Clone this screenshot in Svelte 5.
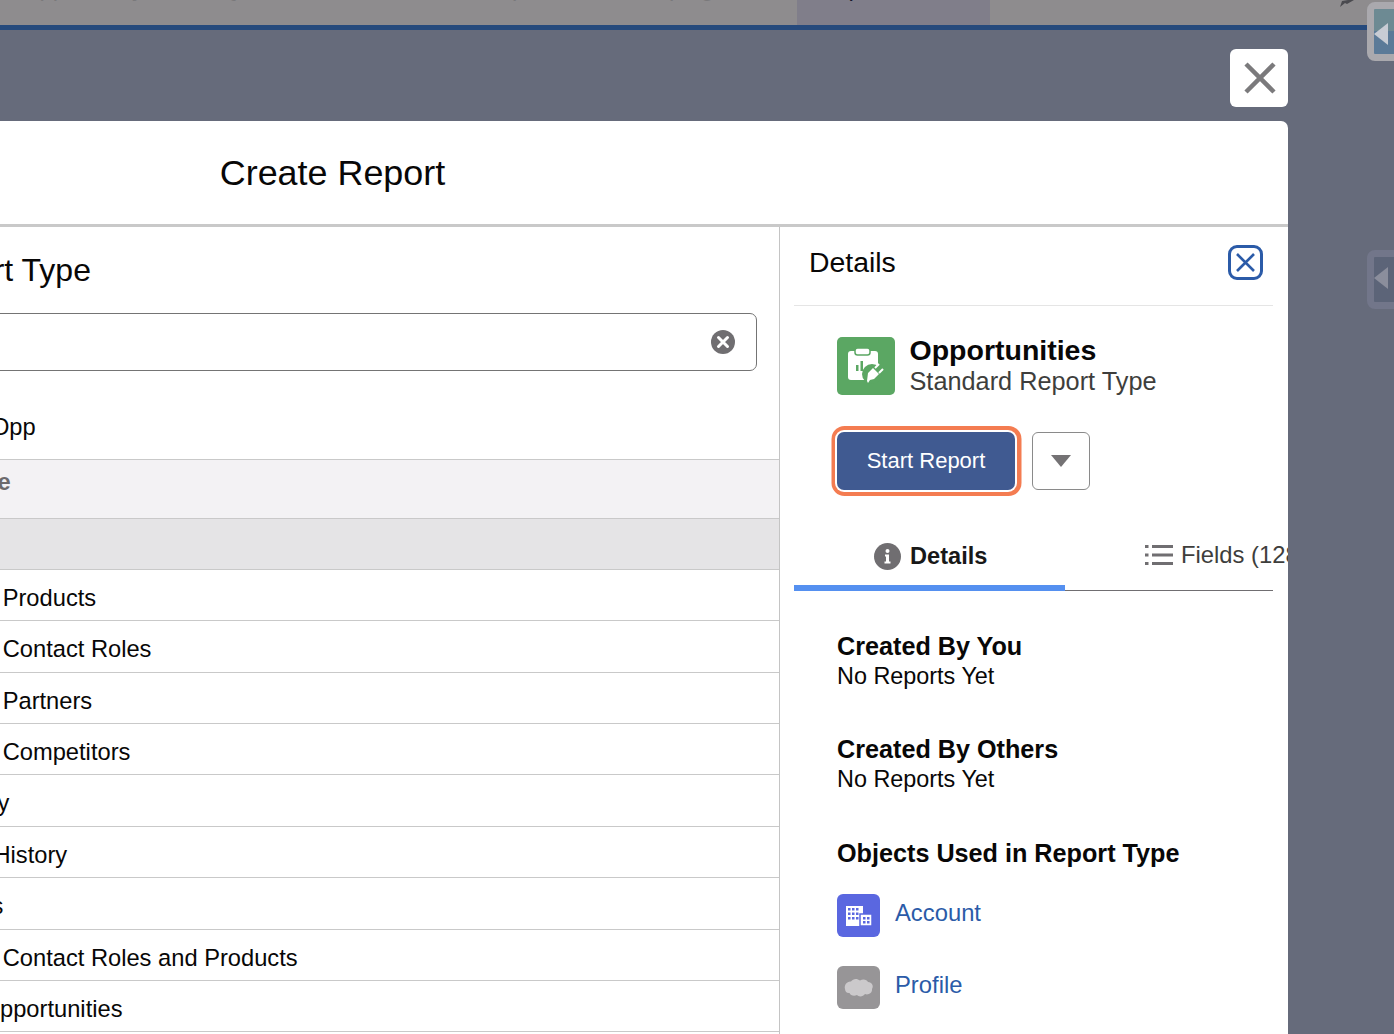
<script>
  const navTabs = [
    { label: 'Opportunity', active: false },
    { label: 'Quotes', active: false },
    { label: 'Leads Pipeline', active: false },
    { label: 'Campaigns', active: false },
    { label: 'Reports', active: true },
    { label: 'Chatter', active: false }
  ];
  const rows = [
    { text: 'Customer Report Opp', kind: 'first', inset: 428 },
    { text: 'Standard Report Type', kind: 'section', inset: 389 },
    { text: 'Opportunities', kind: 'selected', inset: 430.5 },
    { text: 'Opportunities with Products', kind: 'plain', inset: 430.5 },
    { text: 'Opportunities with Contact Roles', kind: 'plain', inset: 430.5 },
    { text: 'Opportunities with Partners', kind: 'plain', inset: 430.5 },
    { text: 'Opportunities with Competitors', kind: 'plain', inset: 430.5 },
    { text: 'Opportunity History', kind: 'plain', inset: 430.5 },
    { text: 'Opportunity Field History', kind: 'plain', inset: 430.5 },
    { text: 'Opportunity Trends', kind: 'plain', inset: 426 },
    { text: 'Opportunities with Contact Roles and Products', kind: 'plain', inset: 430.5 },
    { text: 'Campaigns with Opportunities', kind: 'plain', inset: 430.5 }
  ];
</script>

<div class="page">
  <header class="topbar">
    {#each navTabs as tab}
      <div class="navtab" class:active={tab.active}><span>{tab.label}</span></div>
    {/each}
    <svg class="pencil" width="18" height="8" viewBox="0 0 18 8"><path d="M1 7 L3 1 L9 0 L15 0 L8 4 L6 3 Z" fill="#4a4a4f"/></svg>
  </header>
  <div class="rule"></div>

  <div class="backdrop">
    <button class="close" aria-label="Close">
      <svg width="32" height="32" viewBox="0 0 32 32"><path d="M2 2 L30 30 M30 2 L2 30" stroke="#7b7a7c" stroke-width="4.5"/></svg>
    </button>

    <section class="modal">
      <h1 class="title">Create Report</h1>
      <div class="body">
        <div class="chooser">
          <h2 class="heading">Choose Report Type</h2>
          <div class="search">
            <svg width="24" height="24" viewBox="0 0 24 24"><circle cx="12" cy="12" r="12" fill="#706e71"/><path d="M7.5 7.5 L16.500 16.500 M16.500 7.500 L7.500 16.500" stroke="#fff" stroke-width="3" stroke-linecap="round"/></svg>
          </div>
          <ul class="list">
            {#each rows as row}
              <li class={row.kind} style:padding-left="{row.inset}px">{row.text}</li>
            {/each}
          </ul>
        </div>

        <aside class="details">
          <div class="details-head">
            <span>Details</span>
            <button class="xbox" aria-label="Close details">
              <svg width="21" height="21" viewBox="0 0 21 21"><path d="M2 2 L19 19 M19 2 L2 19" stroke="#2b5ba8" stroke-width="2.600"/></svg>
            </button>
          </div>

          <div class="summary">
            <svg class="tile" width="58" height="58" viewBox="0 0 58 58">
              <rect width="58" height="58" rx="5" fill="#5ba763"/>
              <rect x="11" y="14" width="30" height="29" rx="3" fill="#fff"/>
              <rect x="18" y="11" width="15" height="7" rx="2.500" fill="#fff" stroke="#5ba763" stroke-width="1.500"/>
              <rect x="19" y="28" width="2.500" height="6" fill="#5ba763"/>
              <rect x="23.500" y="24" width="2.500" height="10" fill="#5ba763"/>
              <circle cx="35" cy="37" r="10" fill="#5ba763"/>
              <path d="M30 44 L31 36 L36 31 L42 37 L37 42 L33 43 L31 46 Z" fill="#fff"/>
              <path d="M38 31 L42 27 M42 36 L46 32" stroke="#fff" stroke-width="2"/>
            </svg>
            <div class="summary-text">
              <strong>Opportunities</strong>
              <span>Standard Report Type</span>
            </div>
          </div>

          <div class="actions">
            <button class="start">Start Report</button>
            <button class="more" aria-label="More actions">
              <svg width="20" height="12" viewBox="0 0 20 12"><path d="M0 0 H20 L10 12 Z" fill="#747274"/></svg>
            </button>
          </div>

          <div class="tabs">
            <div class="tab current">
              <svg width="27" height="27" viewBox="0 0 27 27"><circle cx="13.500" cy="13.500" r="13.500" fill="#706e71"/><path d="M11 11.500 H15 V18.500 H16.500 V20.500 H10.500 V18.500 H12 V13.500 H11 Z" fill="#fff"/><circle cx="13.500" cy="8" r="2" fill="#fff"/></svg>
              <b>Details</b>
            </div>
            <div class="tab other">
              <svg width="28" height="22" viewBox="0 0 28 22"><g fill="#706e71"><rect x="0" y="1" width="3.500" height="3"/><rect x="0" y="9.500" width="3.500" height="3"/><rect x="0" y="18" width="3.500" height="3"/><rect x="7" y="1" width="21" height="3"/><rect x="7" y="9.500" width="21" height="3"/><rect x="7" y="18" width="21" height="3"/></g></svg>
              <span>Fields (128)</span>
            </div>
          </div>

          <div class="block one">
            <h3>Created By You</h3>
            <p>No Reports Yet</p>
          </div>
          <div class="block two">
            <h3>Created By Others</h3>
            <p>No Reports Yet</p>
          </div>
          <div class="block three">
            <h3>Objects Used in Report Type</h3>
          </div>

          <div class="object">
            <svg width="43" height="43" viewBox="0 0 43 43">
              <rect width="43" height="43" rx="6" fill="#5a67e0"/>
              <rect x="9" y="12" width="17" height="20" fill="#fff"/>
              <rect x="23" y="20" width="12" height="12" fill="#fff" stroke="#5a67e0" stroke-width="1.500"/>
              <g fill="#5a67e0">
                <rect x="11" y="14" width="2.500" height="2.500"/><rect x="15" y="14" width="2.500" height="2.500"/><rect x="19" y="14" width="2.500" height="2.500"/>
                <rect x="11" y="18.500" width="2.500" height="2.500"/><rect x="15" y="18.500" width="2.500" height="2.500"/><rect x="19" y="18.500" width="2.500" height="2.500"/>
                <rect x="11" y="23" width="2.500" height="2.500"/><rect x="15" y="23" width="2.500" height="2.500"/><rect x="19" y="23" width="2.500" height="2.500"/>
                <rect x="26" y="23" width="2.500" height="2.500"/><rect x="30" y="23" width="2.500" height="2.500"/>
                <rect x="26" y="27" width="2.500" height="2.500"/><rect x="30" y="27" width="2.500" height="2.500"/>
              </g>
            </svg>
            <a href="#account">Account</a>
          </div>
          <div class="object last">
            <svg width="43" height="43" viewBox="0 0 43 43">
              <rect width="43" height="43" rx="6" fill="#979597"/>
              <path d="M8 23 C7 19 10 15 14 15.500 C16 12.500 20 12 23 14.500 C26 12.500 30 13.500 31 16 C35 16 37 20 35 23 C35.500 27 31 29.500 28 28 C26 31 21.500 31 20 29 C17 30.500 13.500 29.500 12.500 27 C10 27.500 8 25.500 8 23 Z" fill="#cbc9cb"/>
            </svg>
            <a href="#profile">Profile</a>
          </div>
        </aside>
      </div>
    </section>

    <div class="handle upper"><i></i></div>
    <div class="handle lower"><i></i></div>
  </div>
</div>

<style>
  :global(body) { margin: 0; }
  * { box-sizing: border-box; }

  .page {
    position: relative;
    width: 1394px;
    height: 1034px;
    overflow: hidden;
    display: flex;
    flex-direction: column;
    font-family: "Liberation Sans", Arial, sans-serif;
    color: #080707;
  }

  .topbar {
    height: 25px;
    flex: none;
    display: flex;
    background: #8e8c8e;
    overflow: hidden;
    position: relative;
  }
  .navtab {
    width: 199.250px;
    flex: none;
    padding-left: 21px;
    font-size: 23.800px;
    line-height: 28px;
    color: #7a797b;
  }
  .navtab span { display: block; margin-top: -26px; white-space: nowrap; }
  .navtab.active { width: 193px; background: #807e8a; color: #17172b; }
  .pencil { position: absolute; left: 1339px; top: 0; }

  .rule { height: 5px; flex: none; background: #264a7c; }

  .backdrop {
    flex: 1;
    min-height: 0;
    background: #666b7b;
    display: flex;
    flex-direction: column;
    align-items: flex-end;
    padding: 19px 106px 0 0;
  }

  .close {
    width: 58px;
    height: 58px;
    flex: none;
    margin-bottom: 14px;
    padding: 0 0 0 1px;
    border: 0;
    border-radius: 6px;
    background: #fff;
    display: flex;
    align-items: center;
    justify-content: center;
  }

  .modal {
    width: 1912px;
    flex: 1;
    min-height: 0;
    background: #fff;
    border-radius: 7px 7px 0 0;
    overflow: hidden;
    display: flex;
    flex-direction: column;
  }
  .title {
    height: 106px;
    flex: none;
    margin: 0;
    padding-left: 1px;
    border-bottom: 3px solid #c9c9c9;
    font-size: 35.900px;
    font-weight: 400;
    line-height: 105px;
    text-align: center;
  }

  .body { flex: 1; min-height: 0; display: flex; }

  .chooser {
    width: 1404px;
    flex: none;
    border-right: 1px solid #c4c4c4;
  }
  .heading {
    margin: 0;
    height: 86px;
    padding: 23px 0 0 422px;
    font-size: 32px;
    font-weight: 400;
    line-height: 40px;
    white-space: nowrap;
  }
  .search {
    margin-left: 430px;
    width: 951px;
    height: 58px;
    border: 1px solid #747474;
    border-radius: 7px;
    display: flex;
    align-items: center;
    justify-content: flex-end;
    padding-right: 21px;
  }

  .list { list-style: none; margin: 38px 0 0; padding: 0; }
  .list li {
    height: 51.400px;
    border-bottom: 1px solid #c9c9c9;
    font-size: 23.700px;
    line-height: 56px;
    white-space: nowrap;
  }
  .list li.first { line-height: 37px; }
  .list li.section {
    height: 59px;
    background: #f3f2f4;
    color: #6c6a6c;
    font-weight: 700;
    line-height: 45px;
  }
  .list li.selected { height: 50.400px; background: #e5e4e6; }

  .details {
    width: 508px;
    flex: none;
    padding: 0 15px 0 14px;
    overflow: hidden;
  }
  .details-head {
    height: 79px;
    border-bottom: 1px solid #e5e5e5;
    padding: 0 10px 7px 15px;
    display: flex;
    align-items: center;
    justify-content: space-between;
    font-size: 28.400px;
  }
  .xbox {
    width: 35px;
    height: 35px;
    padding: 0;
    background: #fff;
    border: 3px solid #2b5ba8;
    border-radius: 9px;
    display: flex;
    align-items: center;
    justify-content: center;
  }

  .summary {
    display: flex;
    gap: 14.500px;
    padding: 31px 0 0 43px;
  }
  .tile { flex: none; }
  .summary-text { display: flex; flex-direction: column; margin-top: -3px; }
  .summary-text strong { font-size: 28.500px; line-height: 32px; }
  .summary-text span { font-size: 25.300px; line-height: 30px; color: #3e3e3c; }

  .actions {
    display: flex;
    gap: 17px;
    padding: 36px 0 0 43px;
  }
  .start {
    width: 178px;
    height: 58px;
    padding: 0;
    border: 0;
    border-radius: 7px;
    background: #405a91;
    color: #fff;
    font: 400 22px "Liberation Sans", Arial, sans-serif;
    box-shadow: 0 0 0 2px #fff, 0.500px 0 0 6px #f47c51;
  }
  .more {
    width: 58px;
    height: 58px;
    padding: 0;
    background: #fff;
    border: 1px solid #8a8a8a;
    border-radius: 6px;
    display: flex;
    align-items: center;
    justify-content: center;
  }

  .tabs {
    display: flex;
    margin-top: 32px;
    height: 69px;
    position: relative;
    border-bottom: 1.500px solid #706e71;
    margin-bottom: 0;
  }
  .tab { display: flex; align-items: center; height: 66px; white-space: nowrap; font-size: 23.800px; flex: none; }
  .tab.current {
    width: 271px;
    height: 69px;
    padding: 5px 0 0 80px;
    gap: 9px;
    border-bottom: 6px solid #5590f0;
    margin-bottom: -1.500px;
    color: #181818;
  }
  .tab b { font-size: 23.600px; }
  .tab.other { padding-left: 80px; gap: 8px; color: #3e3e3c; }

  .block h3 { margin: 0; font-size: 25.200px; line-height: 30px; font-weight: 700; }
  .block p { margin: 0; font-size: 23.400px; line-height: 30px; }
  .block { padding-left: 43px; }
  .block.one { padding-top: 40px; }
  .block.two { padding-top: 43px; }
  .block.three { padding-top: 44px; }

  .object {
    display: flex;
    align-items: center;
    gap: 15px;
    padding: 26px 0 0 43px;
    font-size: 23.800px;
  }
  .object.last { padding-top: 29px; }
  .object svg { flex: none; }
  .object a { color: #2b5ba8; text-decoration: none; margin-top: -6px; }

  .handle {
    position: absolute;
    left: 1367px;
    width: 40px;
    height: 59px;
    border-radius: 8px;
    border: 7px solid;
    overflow: hidden;
  }
  .handle i {
    position: absolute;
    left: 0;
    width: 0;
    height: 0;
    border-top: 11px solid transparent;
    border-bottom: 11px solid transparent;
  }
  .handle.upper {
    top: 2px;
    border-color: #aaa9ae;
    background: linear-gradient(#6d8a93 0 50%, #5b7a98 50%);
  }
  .handle.upper i { top: 14px; border-right: 14px solid #c8ccd4; }
  .handle.lower {
    top: 250px;
    border-color: #72768a;
    background: #5c6478;
  }
  .handle.lower i { top: 10px; border-right: 14px solid #8b8e9c; }
</style>
